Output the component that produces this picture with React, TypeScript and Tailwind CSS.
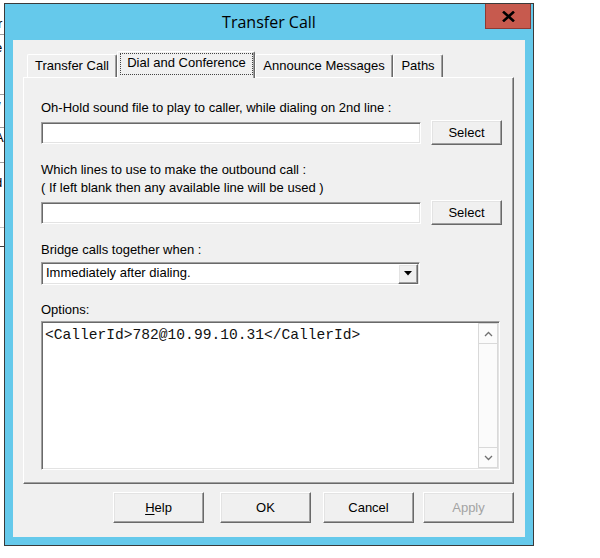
import React from "react";

const sunken =
  "border border-t-[#a0a0a0] border-l-[#a0a0a0] border-r-white border-b-white shadow-[inset_1px_1px_0_#696969,inset_-1px_-1px_0_#e3e3e3]";
const raised =
  "border border-t-white border-l-white border-r-[#696969] border-b-[#696969] shadow-[inset_-1px_-1px_0_#a0a0a0,inset_1px_1px_0_#e3e3e3]";

function Button({
  children,
  className = "",
  disabled = false,
}: {
  children: React.ReactNode;
  className?: string;
  disabled?: boolean;
}) {
  return (
    <div
      className={`flex shrink-0 items-center justify-center bg-[#f0f0f0] ${raised} ${
        disabled ? "text-[#a3a3a3]" : "text-black"
      } ${className}`}
    >
      {children}
    </div>
  );
}

function Tab({ label, className }: { label: string; className: string }) {
  return (
    <div
      className={`flex h-[23px] shrink-0 items-center justify-center rounded-t-[2px] border-l border-t border-r border-l-white border-t-white border-r-[#696969] bg-[#f0f0f0] pb-[1px] shadow-[inset_-1px_0_0_#a0a0a0] ${className}`}
    >
      {label}
    </div>
  );
}

function BackWindow() {
  // sliver of the window that sits behind the dialog
  return (
    <div className="flex h-full w-[4px] shrink-0 flex-col overflow-hidden bg-white text-[13px] leading-[16px] text-black">
      <div className="-mt-[10px] -ml-[5px] h-[16px]">y</div>
      <div className="mt-[10px] -ml-[2px] h-[12px]">r</div>
      <div className="mt-[6px] h-px bg-[#a0a0a0]" />
      <div className="mt-[5px] -ml-[5px] h-[14px]">e</div>
      <div className="mt-[40px] h-px bg-[#a0a0a0]" />
      <div className="mt-[4px] -ml-[3px] h-[14px]">/</div>
      <div className="mt-[14px] h-px bg-[#a0a0a0]" />
      <div className="mt-[2px] -ml-[5px] h-[18px]">A</div>
      <div className="mt-[14px] h-px bg-[#a0a0a0]" />
      <div className="mt-[12px] -ml-[5px] h-[16px]">d</div>
      <div className="mt-[36px] h-px bg-[#c8c8c8]" />
      <div className="mt-[18px] h-px bg-[#404040]" />
    </div>
  );
}

export default function App() {
  return (
    <div className="flex h-[558px] w-[600px] overflow-hidden bg-white font-['Liberation_Sans',Arial,sans-serif] text-[13px] text-black">
      <BackWindow />
      <div className="mt-[3px] flex h-[543px] w-[530px] shrink-0 flex-col border border-[#3a3a3a] bg-[#65c9eb]">
        {/* title bar */}
        <div className="grid h-[36px] grid-cols-[1fr_auto_1fr]">
          <div />
          <div className="self-center pb-[1px] font-['Open_Sans',sans-serif] text-[16px] text-black">
            Transfer Call
          </div>
          <div className="flex items-start justify-end pr-[2px]">
            <div className="flex h-[25px] w-[46px] items-center justify-center border border-t-0 border-[#8e3a33] bg-[#c75a4e]">
              <svg width="13" height="11" viewBox="0 0 13 11">
                <path d="M2 1.5 L11 9.5 M11 1.5 L2 9.5" stroke="#000" strokeWidth="2.6" strokeLinecap="square" />
              </svg>
            </div>
          </div>
        </div>

        {/* client area */}
        <div className="mx-[8px] flex h-[497px] flex-col bg-[#f0f0f0] pl-[10px] pr-[11px] pt-[11px]">
          <div className="flex h-[26px] items-end pl-[4px]">
            <Tab label="Transfer Call" className="w-[90px]" />
            <div className="relative z-10 -mb-[1px] flex h-[27px] w-[138px] shrink-0 flex-col rounded-t-[2px] border-l border-t border-r border-l-white border-t-white border-r-[#696969] bg-[#f0f0f0] pl-[2px] pr-[1px] pt-[1px] shadow-[inset_-1px_0_0_#a0a0a0]">
              <div className="flex h-[22px] items-center justify-center border border-dotted border-[#444] pb-[2px]">
                Dial and Conference
              </div>
            </div>
            <Tab label="Announce Messages" className="w-[138px]" />
            <Tab label="Paths" className="w-[50px]" />
          </div>

          <div className="flex h-[407px] flex-col border border-t-white border-l-white border-r-[#696969] border-b-[#696969] pl-[17px] pt-[22px] shadow-[inset_-1px_-1px_0_#a0a0a0]">
            <div className="h-[16px] leading-[16px]">
              Oh-Hold sound file to play to caller, while dialing on 2nd line :
            </div>
            <div className="mt-[4px] flex h-[25px] items-center">
              <div className={`h-[22px] w-[380px] bg-white ${sunken}`} />
              <Button className="ml-[10px] h-[25px] w-[71px]">Select</Button>
            </div>

            <div className="mt-[16px] h-[18px] leading-[18px]">
              Which lines to use to make the outbound call :
            </div>
            <div className="h-[18px] leading-[18px]">
              ( If left blank then any available line will be used )
            </div>
            <div className="mt-[3px] flex h-[25px] items-center">
              <div className={`h-[22px] w-[380px] bg-white ${sunken}`} />
              <Button className="ml-[10px] h-[25px] w-[71px]">Select</Button>
            </div>

            <div className="mt-[16px] h-[18px] leading-[18px]">Bridge calls together when :</div>
            <div className={`mt-[3px] flex h-[23px] w-[379px] items-center bg-white p-px ${sunken}`}>
              <div className="flex-1 pl-[3px] pb-[1px]">Immediately after dialing.</div>
              <div className={`flex h-[20px] w-[20px] items-center justify-center bg-[#f0f0f0] ${raised}`}>
                <svg width="8" height="5" viewBox="0 0 8 5">
                  <path d="M0 0 H8 L4 4.5 Z" fill="#000" />
                </svg>
              </div>
            </div>

            <div className="mt-[16px] h-[18px] leading-[18px]">Options:</div>
            <div className={`mt-[2px] flex h-[149px] w-[459px] bg-white p-px ${sunken}`}>
              <div className="flex-1 pl-[2px] pt-[4px] font-['Liberation_Mono',monospace] text-[14.6px] leading-[17px] text-[#111]">
                {"<CallerId>782@10.99.10.31</CallerId>"}
              </div>
              <div className="flex w-[20px] flex-col border border-[#d9d9d9] bg-[#fbfbfb]">
                <div className="flex h-[20px] items-center justify-center border-b border-[#d9d9d9]">
                  <svg width="9" height="6" viewBox="0 0 9 6">
                    <path d="M1 5 L4.5 1.5 L8 5" stroke="#707070" strokeWidth="1.3" fill="none" />
                  </svg>
                </div>
                <div className="flex-1" />
                <div className="flex h-[20px] items-center justify-center border-t border-[#d9d9d9]">
                  <svg width="9" height="6" viewBox="0 0 9 6">
                    <path d="M1 1 L4.5 4.5 L8 1" stroke="#707070" strokeWidth="1.3" fill="none" />
                  </svg>
                </div>
              </div>
            </div>
          </div>

          {/* dialog buttons */}
          <div className="mt-[8px] flex h-[31px] pl-[90px]">
            <Button className="h-[31px] w-[91px]">
              <span>
                <span className="underline underline-offset-2">H</span>elp
              </span>
            </Button>
            <Button className="ml-[16px] h-[31px] w-[91px]">OK</Button>
            <Button className="ml-[12px] h-[31px] w-[91px]">Cancel</Button>
            <Button className="ml-[9px] h-[31px] w-[91px]" disabled>
              Apply
            </Button>
          </div>
        </div>
      </div>
    </div>
  );
}
